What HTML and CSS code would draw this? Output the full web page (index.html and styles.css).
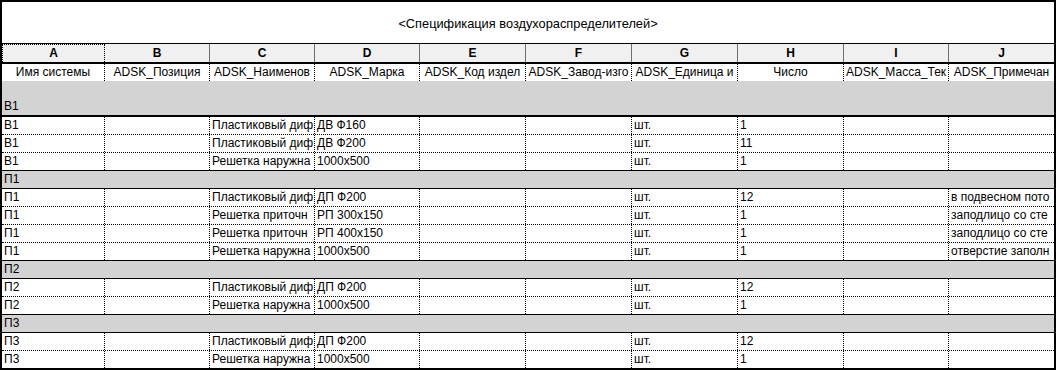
FILE: index.html
```html
<!DOCTYPE html>
<html lang="ru">
<head>
<meta charset="utf-8">
<title>Спецификация воздухораспределителей</title>
<link rel="stylesheet" href="styles.css">
</head>
<body>
<div class="sheet">
  <div class="title">&lt;Спецификация воздухораспределителей&gt;</div>
  <div class="row letters">
    <div class="c sel">A</div><div class="c">B</div><div class="c">C</div><div class="c">D</div><div class="c">E</div><div class="c">F</div><div class="c">G</div><div class="c">H</div><div class="c">I</div><div class="c">J</div>
  </div>
  <div class="row fields">
    <div class="c">Имя системы</div><div class="c">ADSK_Позиция</div><div class="c">ADSK_Наименов</div><div class="c">ADSK_Марка</div><div class="c">ADSK_Код издел</div><div class="c">ADSK_Завод-изго</div><div class="c">ADSK_Единица и</div><div class="c">Число</div><div class="c">ADSK_Масса_Тек</div><div class="c">ADSK_Примечан</div>
  </div>

  <div class="grp first">В1</div>
  <div class="row"><div class="c">В1</div><div class="c"></div><div class="c">Пластиковый диф</div><div class="c">ДВ Ф160</div><div class="c"></div><div class="c"></div><div class="c">шт.</div><div class="c">1</div><div class="c"></div><div class="c"></div></div>
  <div class="row"><div class="c">В1</div><div class="c"></div><div class="c">Пластиковый диф</div><div class="c">ДВ Ф200</div><div class="c"></div><div class="c"></div><div class="c">шт.</div><div class="c">11</div><div class="c"></div><div class="c"></div></div>
  <div class="row end"><div class="c">В1</div><div class="c"></div><div class="c">Решетка наружна</div><div class="c">1000x500</div><div class="c"></div><div class="c"></div><div class="c">шт.</div><div class="c">1</div><div class="c"></div><div class="c"></div></div>

  <div class="grp">П1</div>
  <div class="row"><div class="c">П1</div><div class="c"></div><div class="c">Пластиковый диф</div><div class="c">ДП Ф200</div><div class="c"></div><div class="c"></div><div class="c">шт.</div><div class="c">12</div><div class="c"></div><div class="c">в подвесном пото</div></div>
  <div class="row"><div class="c">П1</div><div class="c"></div><div class="c">Решетка приточн</div><div class="c">РП 300x150</div><div class="c"></div><div class="c"></div><div class="c">шт.</div><div class="c">1</div><div class="c"></div><div class="c">заподлицо со сте</div></div>
  <div class="row"><div class="c">П1</div><div class="c"></div><div class="c">Решетка приточн</div><div class="c">РП 400x150</div><div class="c"></div><div class="c"></div><div class="c">шт.</div><div class="c">1</div><div class="c"></div><div class="c">заподлицо со сте</div></div>
  <div class="row end"><div class="c">П1</div><div class="c"></div><div class="c">Решетка наружна</div><div class="c">1000x500</div><div class="c"></div><div class="c"></div><div class="c">шт.</div><div class="c">1</div><div class="c"></div><div class="c">отверстие заполн</div></div>

  <div class="grp">П2</div>
  <div class="row"><div class="c">П2</div><div class="c"></div><div class="c">Пластиковый диф</div><div class="c">ДП Ф200</div><div class="c"></div><div class="c"></div><div class="c">шт.</div><div class="c">12</div><div class="c"></div><div class="c"></div></div>
  <div class="row end"><div class="c">П2</div><div class="c"></div><div class="c">Решетка наружна</div><div class="c">1000x500</div><div class="c"></div><div class="c"></div><div class="c">шт.</div><div class="c">1</div><div class="c"></div><div class="c"></div></div>

  <div class="grp">П3</div>
  <div class="row"><div class="c">П3</div><div class="c"></div><div class="c">Пластиковый диф</div><div class="c">ДП Ф200</div><div class="c"></div><div class="c"></div><div class="c">шт.</div><div class="c">12</div><div class="c"></div><div class="c"></div></div>
  <div class="row last"><div class="c">П3</div><div class="c"></div><div class="c">Решетка наружна</div><div class="c">1000x500</div><div class="c"></div><div class="c"></div><div class="c">шт.</div><div class="c">1</div><div class="c"></div><div class="c"></div></div>
</div>
</body>
</html>
```

FILE: styles.css
```css
html, body {
  margin: 0;
  padding: 0;
  background: #fff;
}

body {
  font-family: "Liberation Sans", Arial, sans-serif;
  font-size: 12px;
  color: #000;
}

.sheet {
  box-sizing: border-box;
  width: 1056px;
  height: 370px;
  border: 2px solid #000;
  overflow: hidden;
}

.title {
  box-sizing: border-box;
  height: 42px;
  border-bottom: 1px solid #000;
  display: flex;
  align-items: center;
  justify-content: center;
  padding-top: 1px;
  font-size: 12.8px;
}

.row {
  display: grid;
  grid-template-columns: 103px 105px 105px 105px 106px 106px 106px 106px 105px 105px;
  box-sizing: border-box;
  height: 18px;
  border-bottom: 1px dotted #000;
  line-height: 17px;
}

.row.end {
  border-bottom: 1px solid #000;
}

.row.last {
  height: 17px;
  border-bottom: 0;
}

.c {
  box-sizing: border-box;
  border-right: 1px dotted #000;
  padding: 0 2px;
  overflow: hidden;
  white-space: nowrap;
}

.c:last-child {
  border-right: 0;
}

.letters {
  height: 20px;
  border-bottom: 2px solid #000;
  line-height: 18px;
  background: #f0f0f0;
}

.letters .c {
  border-right: 1px solid #6e6e6e;
  text-align: center;
  font-weight: bold;
}

.letters .c:last-child {
  border-right: 0;
}

.letters .sel {
  border-right: 1px dotted #000;
  border-top: 1px dotted #000;
  border-left: 1px dotted #000;
  line-height: 17px;
}

.fields {
  height: 17px;
  border-bottom: 0;
  background: #fff;
}

.fields .c {
  text-align: center;
}

.grp {
  box-sizing: border-box;
  height: 18px;
  background: #d3d3d3;
  border-bottom: 1px solid #000;
  line-height: 17px;
  padding-left: 2px;
}

.grp.first {
  height: 36px;
  padding-top: 17px;
  border-bottom: 2px solid #000;
}
```
